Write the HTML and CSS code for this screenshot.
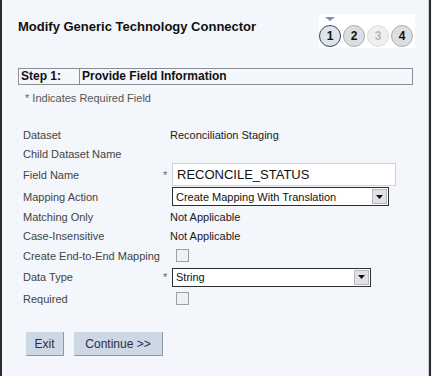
FILE: index.html
```html
<!DOCTYPE html>
<html lang="en">
<head>
    <meta charset="UTF-8">
    <title>Modify Generic Technology Connector</title>
    <link rel="stylesheet" href="styles.css">
</head>
<body>
    <div class="frame">
        <div class="top">
            <h1 class="title">Modify Generic Technology Connector</h1>
            <div class="train">
                <div class="marker"></div>
                <div class="steps">
                    <span class="step current">1</span>
                    <span class="step">2</span>
                    <span class="step off">3</span>
                    <span class="step">4</span>
                </div>
            </div>
        </div>

        <div class="step-bar">
            <div class="step-no">Step 1:</div>
            <div class="step-name">Provide Field Information</div>
        </div>
        <div class="hint"><span class="req">*</span> Indicates Required Field</div>

        <div class="form">
            <div class="row r19">
                <div class="label">Dataset</div><div class="star"></div>
                <div class="value"><span class="plain">Reconciliation Staging</span></div>
            </div>
            <div class="row r19">
                <div class="label">Child Dataset Name</div><div class="star"></div>
                <div class="value"></div>
            </div>
            <div class="row r23">
                <div class="label">Field Name</div><div class="star">*</div>
                <div class="value"><div class="text-input">RECONCILE_STATUS</div></div>
            </div>
            <div class="row r21">
                <div class="label">Mapping Action</div><div class="star"></div>
                <div class="value">
                    <div class="select wide">
                        <span class="sel-text">Create Mapping With Translation</span>
                        <span class="sel-btn"><svg width="7" height="4" viewBox="0 0 7 4"><path d="M0 0h7L3.5 4z" fill="#111"/></svg></span>
                    </div>
                </div>
            </div>
            <div class="row r19">
                <div class="label">Matching Only</div><div class="star"></div>
                <div class="value"><span class="plain">Not Applicable</span></div>
            </div>
            <div class="row r19">
                <div class="label">Case-Insensitive</div><div class="star"></div>
                <div class="value"><span class="plain">Not Applicable</span></div>
            </div>
            <div class="row r21">
                <div class="label">Create End-to-End Mapping</div><div class="star"></div>
                <div class="value"><span class="check"></span></div>
            </div>
            <div class="row r22">
                <div class="label">Data Type</div><div class="star">*</div>
                <div class="value">
                    <div class="select narrow">
                        <span class="sel-text">String</span>
                        <span class="sel-btn"><svg width="7" height="4" viewBox="0 0 7 4"><path d="M0 0h7L3.5 4z" fill="#111"/></svg></span>
                    </div>
                </div>
            </div>
            <div class="row r21">
                <div class="label">Required</div><div class="star"></div>
                <div class="value"><span class="check"></span></div>
            </div>
        </div>

        <div class="buttons">
            <button class="button exit">Exit</button>
            <button class="button continue">Continue &gt;&gt;</button>
        </div>
    </div>
</body>
</html>
```

FILE: styles.css
```css
body {
    margin: 0;
    font-family: "Liberation Sans", Arial, sans-serif;
    font-size: 11px;
    color: #3c3c3c;
    background: #f3f6fa;
}

.frame {
    width: 427px;
    height: 376px;
    border-left: 2px solid #2b2b2b;
    border-right: 2px solid #2b2b2b;
    box-shadow: inset -1px 0 0 #c9ccd2;
    background: #f3f6fa;
    box-sizing: content-box;
}

.top {
    display: flex;
    justify-content: space-between;
    align-items: flex-start;
    padding: 14px 14px 0 16px;
    height: 54px;
}

.title {
    margin: 5px 0 0;
    font-size: 13px;
    font-weight: bold;
    color: #111;
}

.train {
    width: 96px;
    height: 34px;
    background: #fff;
}

.marker {
    width: 0;
    height: 0;
    margin: 3px 0 0 6px;
    border-left: 5px solid transparent;
    border-right: 5px solid transparent;
    border-top: 4px solid #7c8cc6;
}

.steps {
    display: flex;
    gap: 2px;
    margin-top: 4px;
}

.step {
    width: 20px;
    height: 20px;
    border-radius: 50%;
    border: 1px solid #a9adb3;
    background: #dcdee1;
    color: #111;
    font-weight: bold;
    font-size: 12px;
    display: flex;
    align-items: center;
    justify-content: center;
}

.step.current {
    border: 1px solid #3d4757;
    background: #dde4ec;
}

.step.off {
    border-color: #dcdee0;
    background: #eeeff0;
    color: #b8b8b8;
}

.step-bar {
    display: flex;
    margin: 0 16px;
    height: 15px;
    border: 1px solid #8b8f95;
    font-size: 12px;
    font-weight: bold;
    color: #111;
    line-height: 15px;
}

.step-no {
    width: 58px;
    padding-left: 2px;
    border-right: 1px solid #8b8f95;
}

.step-name {
    padding-left: 2px;
}

.hint {
    padding: 7px 0 0 23px;
    color: #555;
}

.req {
    color: #666;
}

.form {
    margin-top: 21px;
    padding-left: 21px;
}

.row {
    display: grid;
    grid-template-columns: 140px 9px 1fr;
    align-items: center;
}

.r19 { height: 19px; }
.r21 { height: 21px; }
.r22 { height: 22px; }
.r23 { height: 23px; }

.label {
    color: #444;
}

.star {
    color: #666;
}

.value {
    color: #1a1a1a;
}

.plain {
    margin-left: -2px;
}

.text-input {
    width: 218px;
    height: 21px;
    border: 1px solid #cfd3d8;
    background: #fff;
    font-size: 13px;
    line-height: 21px;
    padding-left: 4px;
    color: #111;
}

.select {
    display: flex;
    justify-content: space-between;
    align-items: center;
    height: 17px;
    border: 1px solid #2e2e2e;
    background: #fff;
    color: #111;
}

.select.wide { width: 215px; }
.select.narrow { width: 197px; }

.sel-text {
    padding-left: 3px;
}

.sel-btn {
    width: 13px;
    height: 13px;
    margin-right: 1px;
    border: 1px solid #b6b9bd;
    background: #dfe1e4;
    display: flex;
    align-items: center;
    justify-content: center;
}

.check {
    display: block;
    width: 11px;
    height: 11px;
    margin-left: 4px;
    border: 1px solid #9aa0a6;
    background: #eef0f2;
}

.buttons {
    display: flex;
    gap: 10px;
    padding: 23px 0 0 24px;
}

.button {
    height: 24px;
    padding: 0;
    background: #cdd7e6;
    border: none;
    border-right: 1px solid #8d97a8;
    border-bottom: 1px solid #8d97a8;
    font-family: "Liberation Sans", Arial, sans-serif;
    font-size: 12px;
    color: #253040;
}

.exit { width: 38px; }
.continue { width: 89px; }
```
